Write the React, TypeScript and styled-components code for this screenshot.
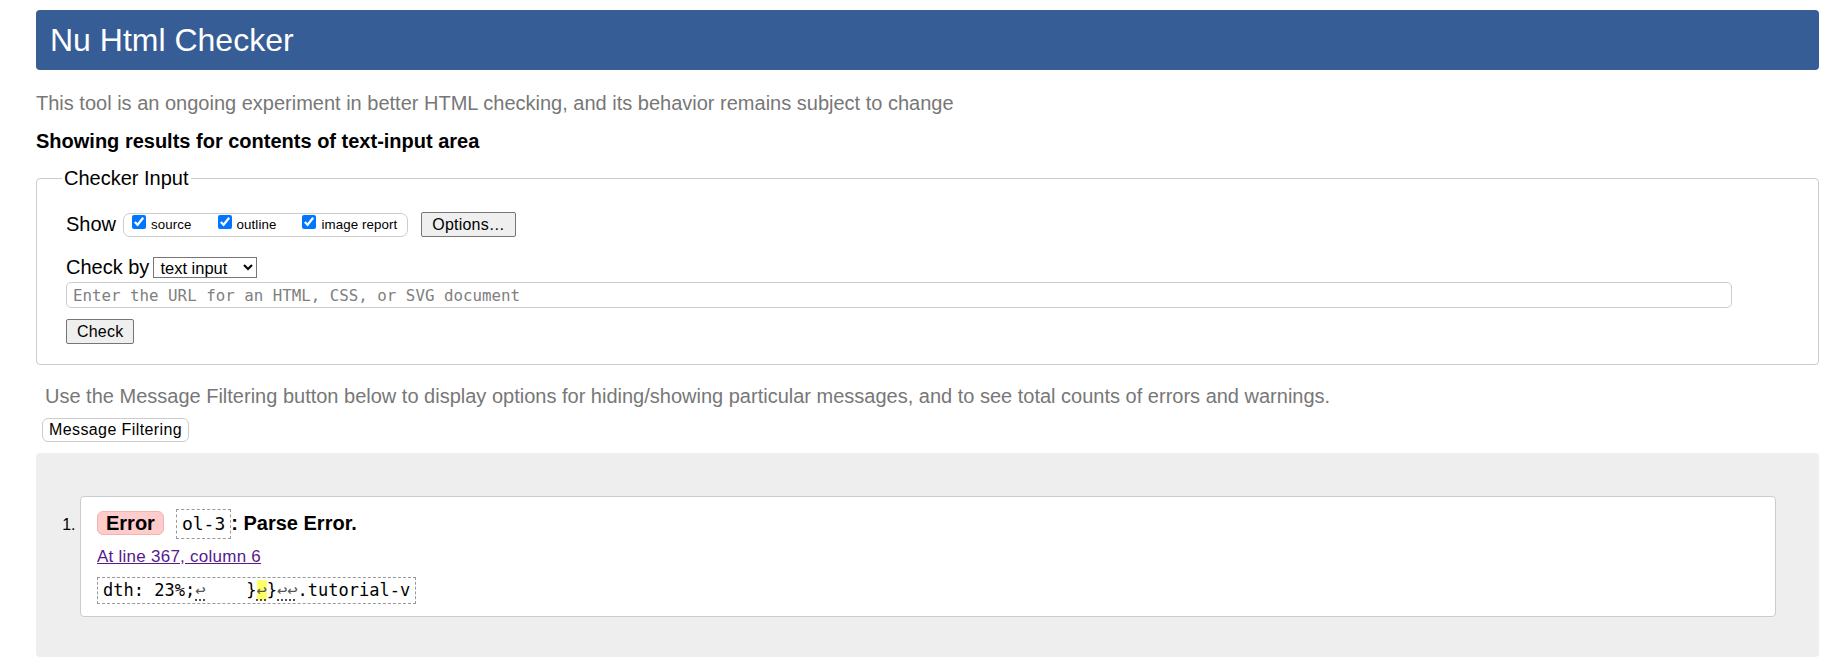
import React from 'react';
import styled, { createGlobalStyle } from 'styled-components';

const GlobalStyle = createGlobalStyle`
  html, body {
    margin: 0;
    padding: 0;
    background: #fff;
  }
  body {
    font-family: "Liberation Sans", Arial, sans-serif;
    color: #000;
  }
`;

const Page = styled.div`
  padding: 10px 13px 11px 36px;
  font-size: 20px;
`;

const Banner = styled.h1`
  margin: 0;
  height: 60px;
  display: flex;
  align-items: center;
  padding: 0 14px;
  background: #365d95;
  color: #fff;
  font-size: 32px;
  font-weight: normal;
  border-radius: 4px;
`;

const Note = styled.p<{ $indent?: number; $top: number }>`
  margin: ${(p) => p.$top}px 0 0;
  padding-left: ${(p) => p.$indent ?? 0}px;
  color: #777;
`;

const ResultsFor = styled.p`
  margin: 15px 0 0;
  font-weight: bold;
`;

const InputSet = styled.fieldset`
  margin: 14px 0 0;
  padding: 22px 29px 20px;
  border: 1px solid #ccc;
  border-radius: 4px;
  min-width: 0;
`;

const Legend = styled.legend`
  padding: 0 2px;
  margin-left: -4px;
  font-size: 20px;
`;

const ControlRow = styled.div<{ $top?: number; $height: number }>`
  display: flex;
  align-items: center;
  height: ${(p) => p.$height}px;
  margin-top: ${(p) => p.$top ?? 0}px;
`;

const RowLabel = styled.span`
  margin-right: 7px;
  white-space: pre;
`;

const ShowGroup = styled.div`
  box-sizing: border-box;
  display: inline-flex;
  align-items: center;
  height: 24px;
  padding: 0 10px 0 8px;
  border: 1px solid #ccc;
  border-radius: 7px;
`;

const ShowOption = styled.label<{ $first?: boolean }>`
  display: inline-flex;
  align-items: center;
  margin-left: ${(p) => (p.$first ? 0 : 26)}px;
  font-size: 13.3px;
  letter-spacing: 0.1px;

  input {
    width: 14px;
    height: 14px;
    margin: 0 5px 6px 0;
  }
`;

const PlainButton = styled.button<{ $left?: number; $top?: number }>`
  box-sizing: border-box;
  height: 25px;
  margin: ${(p) => p.$top ?? 0}px 0 0 ${(p) => p.$left ?? 0}px;
  padding: 0 10px;
  font-family: "Liberation Sans", Arial, sans-serif;
  font-size: 16px;
  letter-spacing: 0.2px;
  color: #000;
  background: #efefef;
  border: 1px solid #767676;
  border-radius: 2px;
`;

const SoftButton = styled(PlainButton)`
  height: 24px;
  padding: 0 6px;
  letter-spacing: 0.4px;
  background: #fff;
  border: 1px solid #ccc;
  border-radius: 6px;
`;

const ModeSelect = styled.select`
  width: 104px;
  height: 21px;
  margin-left: -3px;
  padding: 0 2px;
  font-family: "Liberation Sans", Arial, sans-serif;
  font-size: 16.5px;
  color: #000;
  background: #fff;
  border: 1px solid #767676;
  border-radius: 0;
`;

const UrlInput = styled.input`
  display: block;
  box-sizing: border-box;
  width: calc(100% - 57px);
  height: 26px;
  margin: 3px 0 0;
  padding: 0 6px;
  font-family: "DejaVu Sans Mono", "Liberation Mono", monospace;
  font-size: 15.8px;
  border: 1px solid #ccc;
  border-radius: 5px;

  &::placeholder {
    color: #808080;
  }
`;

const ResultsPanel = styled.div`
  margin-top: 11px;
  padding: 43px 43px 40px 44px;
  background: #eee;
  border-radius: 4px;
`;

const MessageList = styled.ol`
  margin: 0;
  padding: 0;
`;

const Message = styled.li`
  padding: 12px 16px 12px;
  font-size: 16px;
  background: #fff;
  border: 1px solid #ccc;
  border-radius: 4px;
`;

const MessageTitle = styled.p`
  margin: 0;
  font-size: 20px;
  font-weight: bold;
`;

const Badge = styled.span`
  display: inline-block;
  box-sizing: border-box;
  height: 24px;
  line-height: 22px;
  padding: 0 8px;
  margin-right: 12px;
  background: #fcc;
  border: 1px solid #f0b4b4;
  border-radius: 6px;
`;

const CodeBox = styled.code<{ $size: number; $height: number }>`
  display: inline-block;
  box-sizing: border-box;
  height: ${(p) => p.$height}px;
  line-height: ${(p) => p.$height - 2}px;
  padding: 0 5px;
  font-family: "DejaVu Sans Mono", "Liberation Mono", monospace;
  font-size: ${(p) => p.$size}px;
  font-weight: normal;
  white-space: pre;
  border: 1px dashed #999;
`;

const Location = styled.p`
  margin: 8px 0 0;
  font-size: 17px;
  letter-spacing: 0.25px;

  a {
    color: #551a8b;
    text-decoration: underline;
  }
`;

const Extract = styled.div`
  margin-top: 10px;
`;

const LineBreak = styled.b<{ $hit?: boolean }>`
  font-weight: normal;
  color: #555;
  text-decoration: underline dotted #333;
  text-underline-offset: 4px;
  background: ${(p) => (p.$hit ? '#ff6' : 'transparent')};
`;

export default function App() {
  return (
    <Page>
      <GlobalStyle />
      <Banner>Nu Html Checker</Banner>
      <Note $top={22}>
        This tool is an ongoing experiment in better HTML checking, and its behavior remains subject to change
      </Note>
      <ResultsFor>Showing results for contents of text-input area</ResultsFor>

      <InputSet>
        <Legend>Checker Input</Legend>
        <ControlRow $height={25}>
          <RowLabel>Show</RowLabel>
          <ShowGroup>
            <ShowOption $first>
              <input type="checkbox" defaultChecked />
              source
            </ShowOption>
            <ShowOption>
              <input type="checkbox" defaultChecked />
              outline
            </ShowOption>
            <ShowOption>
              <input type="checkbox" defaultChecked />
              image report
            </ShowOption>
          </ShowGroup>
          <PlainButton $left={13}>Options…</PlainButton>
        </ControlRow>
        <ControlRow $top={19} $height={23}>
          <RowLabel>Check by</RowLabel>
          <ModeSelect defaultValue="text">
            <option value="address">address</option>
            <option value="file">file upload</option>
            <option value="text">text input</option>
          </ModeSelect>
        </ControlRow>
        <UrlInput placeholder="Enter the URL for an HTML, CSS, or SVG document" />
        <PlainButton $top={11}>Check</PlainButton>
      </InputSet>

      <Note $top={20} $indent={9}>
        Use the Message Filtering button below to display options for hiding/showing particular messages, and to see total counts of errors and warnings.
      </Note>
      <SoftButton $left={6} $top={10}>Message Filtering</SoftButton>

      <ResultsPanel>
        <MessageList>
          <Message>
            <MessageTitle>
              <Badge>Error</Badge>
              <CodeBox $size={18} $height={30}>ol-3</CodeBox>: Parse Error.
            </MessageTitle>
            <Location>
              <a href="#l367c6">At line 367, column 6</a>
            </Location>
            <Extract>
              <CodeBox $size={17} $height={27}>
                {'dth: 23%;'}
                <LineBreak>↩</LineBreak>
                {'    }'}
                <LineBreak $hit>↩</LineBreak>
                {'}'}
                <LineBreak>↩↩</LineBreak>
                {'.tutorial-v'}
              </CodeBox>
            </Extract>
          </Message>
        </MessageList>
      </ResultsPanel>
    </Page>
  );
}
